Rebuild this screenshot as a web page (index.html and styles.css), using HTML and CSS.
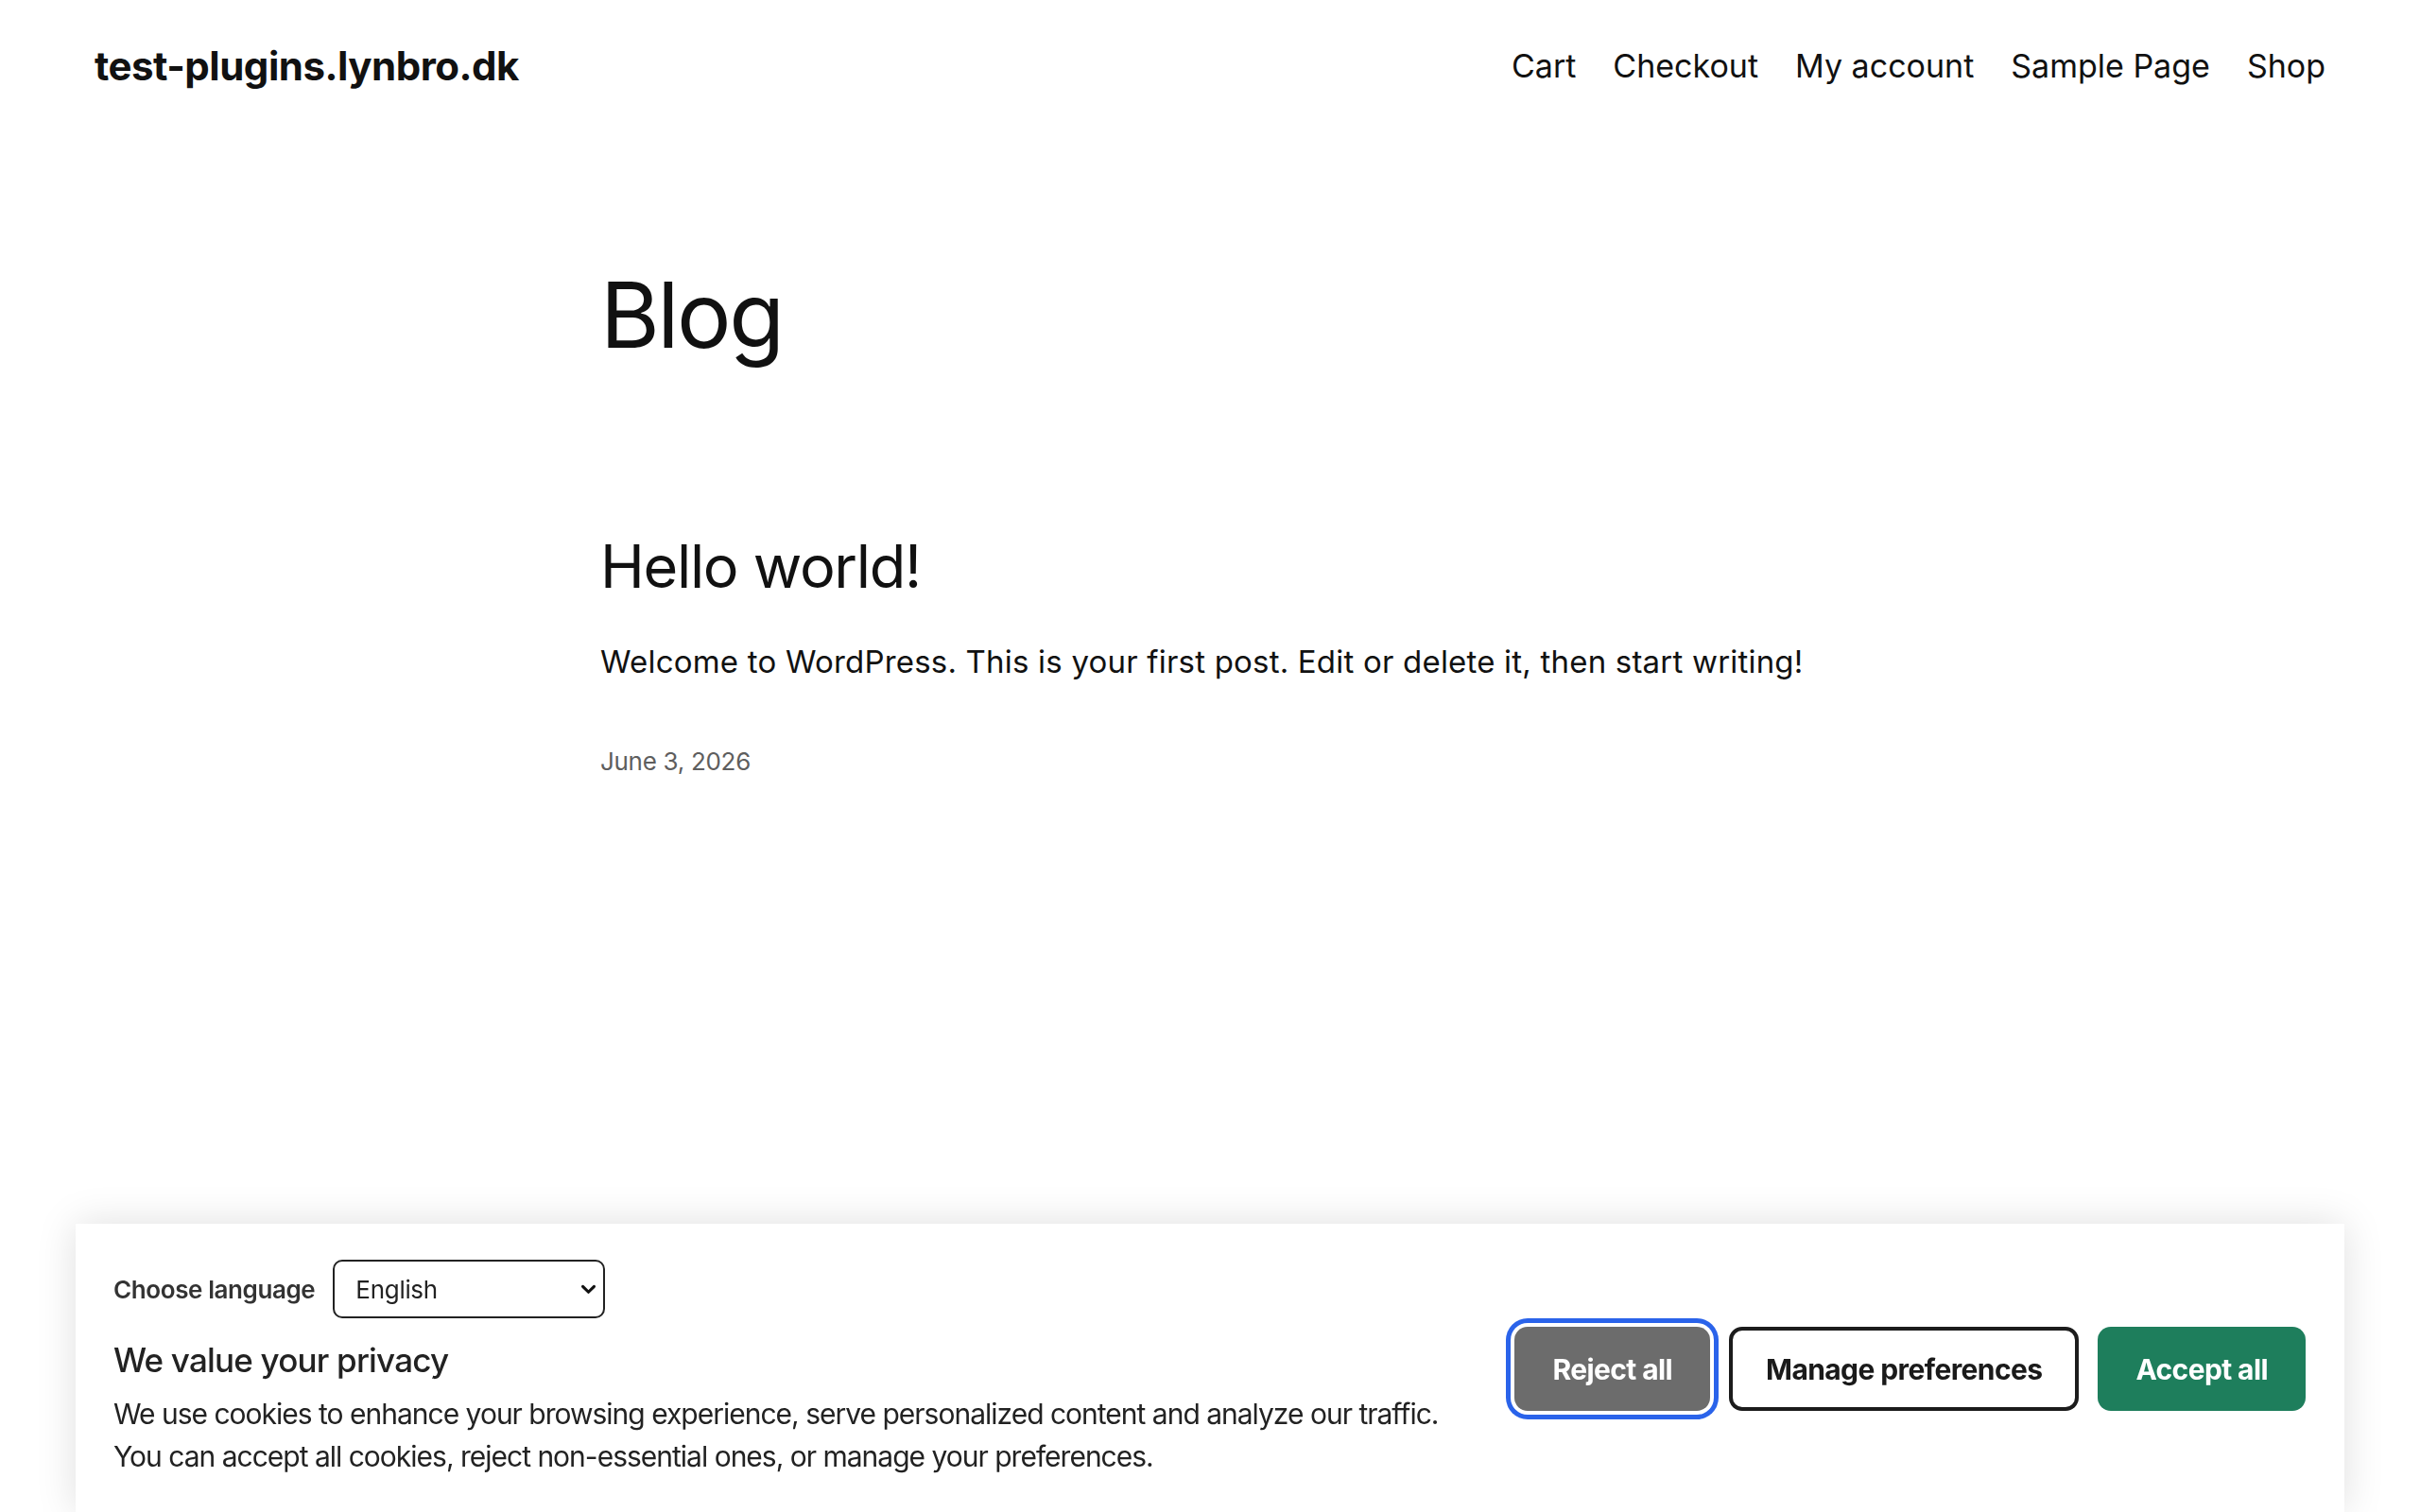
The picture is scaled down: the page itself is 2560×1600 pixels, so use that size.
FILE: index.html
```html
<!DOCTYPE html>
<html lang="en">
<head>
<meta charset="utf-8">
<title>Blog – test-plugins.lynbro.dk</title>
<link rel="stylesheet" href="styles.css">
</head>
<body>
<header class="site-header">
  <a class="site-title" href="#">test-plugins.lynbro.dk</a>
  <nav class="site-nav">
    <a href="#">Cart</a>
    <a href="#">Checkout</a>
    <a href="#">My account</a>
    <a href="#">Sample Page</a>
    <a href="#">Shop</a>
  </nav>
</header>

<main class="content">
  <h1 class="page-title">Blog</h1>
  <article class="post">
    <h2 class="post-title">Hello world!</h2>
    <p class="post-excerpt">Welcome to WordPress. This is your first post. Edit or delete it, then start writing!</p>
    <time class="post-date">June 3, 2026</time>
  </article>
</main>

<section class="cookie-banner">
  <div class="cookie-text">
    <div class="lang-row">
      <label class="lang-label" for="lang">Choose language</label>
      <span class="select-wrap">
        <select id="lang" class="lang-select">
          <option>English</option>
          <option>Dansk</option>
        </select>
        <svg class="select-arrow" viewBox="0 0 18 12" width="17" height="11" aria-hidden="true">
          <path d="M2.5 2.5 L9 9 L15.5 2.5" fill="none" stroke="#111" stroke-width="3.4" stroke-linecap="round" stroke-linejoin="round"/>
        </svg>
      </span>
    </div>
    <h2 class="cookie-title">We value your privacy</h2>
    <p class="cookie-desc">We use cookies to enhance your browsing experience, serve personalized content and analyze our traffic.<br>You can accept all cookies, reject non-essential ones, or manage your preferences.</p>
  </div>
  <div class="cookie-actions">
    <button class="btn btn-reject">Reject all</button>
    <button class="btn btn-manage">Manage preferences</button>
    <button class="btn btn-accept">Accept all</button>
  </div>
</section>
</body>
</html>
```

FILE: styles.css
```css
* { box-sizing: border-box; }

body {
  margin: 0;
  background: #fff;
  color: #111;
  font-family: Inter, "Noto Sans", sans-serif;
}

a { color: inherit; text-decoration: none; }

/* header */
.site-header {
  height: 140px;
  padding: 0 100px;
  display: flex;
  align-items: center;
  justify-content: space-between;
}

.site-title {
  font-size: 42px;
  font-weight: 700;
  letter-spacing: -0.5px;
  line-height: 1;
}

.site-nav {
  display: flex;
  gap: 39px;
  font-size: 34px;
  line-height: 1;
  letter-spacing: 0;
}

/* main column */
.content {
  width: 1290px;
  margin: 0 auto;
}

.page-title {
  margin: 145px 0 0;
  font-size: 96px;
  font-weight: 400;
  line-height: 1;
  letter-spacing: -2.5px;
}

.post-title {
  margin: 187px 0 0;
  font-size: 63px;
  font-weight: 400;
  line-height: 1;
  letter-spacing: -1.3px;
}

.post-excerpt {
  margin: 53px 0 0;
  font-size: 33px;
  line-height: 1;
  letter-spacing: 0.2px;
}

.post-date {
  display: block;
  margin-top: 76px;
  font-size: 26px;
  line-height: 1;
  color: #5e5e5e;
  letter-spacing: -0.3px;
}

/* consent banner */
.cookie-banner {
  position: fixed;
  left: 80px;
  right: 80px;
  bottom: 0;
  padding: 38px 41px 36px 40px;
  background: #fff;
  box-shadow: 0 0 40px rgba(0, 0, 0, 0.13);
  display: flex;
  align-items: center;
  justify-content: space-between;
  gap: 40px;
}

.cookie-text {
  flex: 1 1 auto;
  min-width: 0;
}

.lang-row {
  display: flex;
  align-items: center;
  gap: 19px;
}

.lang-label {
  font-size: 26px;
  font-weight: 600;
  color: #333;
  letter-spacing: -0.4px;
}

.select-wrap {
  position: relative;
  display: inline-flex;
}

.lang-select {
  appearance: none;
  -webkit-appearance: none;
  width: 288px;
  height: 62px;
  padding: 0 40px 0 22px;
  border: 2px solid #222;
  border-radius: 10px;
  background: #fff;
  color: #222;
  font-family: Inter, sans-serif;
  font-size: 26px;
  letter-spacing: -0.3px;
}

.select-arrow {
  position: absolute;
  right: 9px;
  top: 26px;
  pointer-events: none;
}

.cookie-title {
  margin: 27px 0 0;
  font-size: 35px;
  font-weight: 500;
  line-height: 1;
  color: #222;
  letter-spacing: -0.8px;
}

.cookie-desc {
  margin: 17px 0 0;
  font-size: 30px;
  line-height: 45px;
  color: #222;
  letter-spacing: -1px;
  white-space: nowrap;
}

.cookie-actions {
  display: flex;
  flex-shrink: 0;
  align-items: center;
  gap: 20px;
}

.btn {
  height: 89px;
  padding: 0 40px;
  border-radius: 14px;
  font-family: Inter, sans-serif;
  font-size: 30px;
  font-weight: 700;
  letter-spacing: -0.6px;
  white-space: nowrap;
  border: 0;
  cursor: pointer;
}

.btn-reject {
  background: #6c6c6c;
  color: #fff;
  box-shadow: 0 0 0 4px #fff, 0 0 0 9px #2a63ea;
}

.btn-manage {
  background: #fff;
  color: #1a1a1a;
  border: 4px solid #1c1c1c;
  padding: 0 35px;
}

.btn-accept {
  background: #1e7e5c;
  color: #fff;
}
```
